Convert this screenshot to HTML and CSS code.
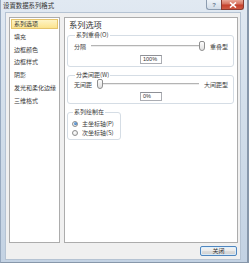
FILE: index.html
```html
<!DOCTYPE html>
<html lang="zh-CN">
<head>
<meta charset="utf-8">
<title>设置数据系列格式</title>
<link rel="stylesheet" href="styles.css">
</head>
<body>
<div class="window">
  <div class="titlebar">
    <span class="title">设置数据系列格式</span>
    <div class="caption-btns">
      <span class="cbtn help">?</span>
      <span class="cbtn close"><svg width="8" height="6" viewBox="0 0 8 6"><path d="M1 0.5 L7 5.5 M7 0.5 L1 5.5" stroke="#fff" stroke-width="1.6" fill="none"/></svg></span>
    </div>
  </div>
  <div class="client">
    <div class="panes">
      <ul class="nav">
        <li class="active">系列选项</li>
        <li>填充</li>
        <li>边框颜色</li>
        <li>边框样式</li>
        <li>阴影</li>
        <li>发光和柔化边缘</li>
        <li>三维格式</li>
      </ul>
      <div class="content">
        <h1 class="heading">系列选项</h1>
        <fieldset class="group">
          <legend>系列重叠(<u>O</u>)</legend>
          <div class="slider-row">
            <span>分隔</span>
            <div class="slider"><div class="rail"><div class="track"></div><div class="thumb" style="left:100%"></div></div></div>
            <span>重叠型</span>
          </div>
          <div class="value-wrap"><div class="value">100%</div></div>
        </fieldset>
        <fieldset class="group tight">
          <legend>分类间距(<u>W</u>)</legend>
          <div class="slider-row">
            <span>无间距</span>
            <div class="slider"><div class="rail"><div class="track"></div><div class="thumb" style="left:0%"></div></div></div>
            <span>大间距型</span>
          </div>
          <div class="value-wrap"><div class="value">0%</div></div>
        </fieldset>
        <fieldset class="group axis">
          <legend>系列绘制在</legend>
          <div class="radio-row"><span class="radio checked"></span><span>主坐标轴(<u>P</u>)</span></div>
          <div class="radio-row"><span class="radio"></span><span>次坐标轴(<u>S</u>)</span></div>
        </fieldset>
      </div>
    </div>
    <div class="footer"><button class="btn">关闭</button></div>
  </div>
</div>
</body>
</html>
```

FILE: styles.css
```css
* {
  box-sizing: border-box;
  margin: 0;
  padding: 0;
}

html, body {
  width: 249px;
  height: 263px;
  overflow: hidden;
}

body {
  font-family: "Noto Sans CJK SC", "Noto Sans", sans-serif;
  font-size: 6px;
  color: #3a3a3a;
  background: #c9d7e6;
}

.window {
  width: 249px;
  height: 263px;
  display: flex;
  flex-direction: column;
  padding: 0 6px 4px 4px;
  background: linear-gradient(180deg, #e1e9f2 0%, #d3dfeb 40%, #c3d2e3 100%);
  border-left: 1px solid #98aac0;
  border-right: 2px solid #8797aa;
  border-bottom: 1px solid #8797aa;
}

.titlebar {
  height: 14px;
  display: flex;
  align-items: flex-start;
}

.title {
  margin-left: -2px;
  font-size: 6.4px;
  line-height: 12px;
  color: #333;
}

.caption-btns {
  margin-left: auto;
  margin-right: -3px;
  display: flex;
}

.cbtn {
  height: 10px;
  display: flex;
  align-items: center;
  justify-content: center;
}

.help {
  width: 15px;
  border: 1px solid #8c9cb0;
  border-top: none;
  border-right: none;
  border-radius: 0 0 0 3px;
  background: linear-gradient(180deg, #eef3f8, #d2dce8);
  color: #6a7a90;
  font-family: "Liberation Sans", sans-serif;
  font-size: 6px;
  font-weight: bold;
}

.close {
  width: 23px;
  border: 1px solid #8a3b30;
  border-top: none;
  border-radius: 0 0 3px 0;
  background: linear-gradient(180deg, #e9a898 0%, #d6735f 45%, #c4402c 55%, #cf5a43 100%);
}

.client {
  flex: 1;
  display: flex;
  flex-direction: column;
  background: #f0f0f0;
  padding: 4px 2px 3px 3px;
  border: 1px solid #b5c3d3;
}

.panes {
  display: flex;
  gap: 4px;
  height: 226px;
}

.nav {
  width: 51px;
  list-style: none;
  background: #fff;
  border: 1px solid #acacac;
  padding-top: 1px;
}

.nav li {
  height: 10px;
  line-height: 10px;
  margin: 0 1px 2.8px 1px;
  padding-left: 3px;
  white-space: nowrap;
}

.nav li.active {
  line-height: 8px;
  padding-left: 2px;
  border: 1px solid #e5c46c;
  background: linear-gradient(180deg, #fef4c6, #fbe38e);
}

.content {
  flex: 1;
  background: #fff;
  border: 1px solid #acacac;
  padding: 1px 3px 0 2px;
}

.heading {
  font-size: 8.2px;
  font-weight: normal;
  line-height: 10px;
  margin-left: 2px;
  color: #333;
}

.group {
  border: 1px solid #d5dde5;
  border-radius: 3px;
  padding: 0 5px 2px 6px;
  margin-top: 2px;
}

.group + .group {
  margin-top: 4px;
}

legend {
  line-height: 8px;
  padding: 0 1px;
  margin-left: 1px;
}

u {
  text-decoration: none;
}

.slider-row {
  display: flex;
  align-items: center;
  gap: 5px;
  height: 10px;
  margin-top: 2px;
  white-space: nowrap;
}

.tight .slider-row {
  margin-top: 0;
}

.slider {
  flex: 1;
  height: 10px;
}

.rail {
  position: relative;
  height: 100%;
  margin: 0 3px;
}

.track {
  position: absolute;
  left: -3px;
  right: -3px;
  top: 4px;
  height: 2px;
  border-top: 1px solid #b4b4b4;
  border-bottom: 1px solid #ececec;
}

.thumb {
  position: absolute;
  top: 0;
  width: 6px;
  height: 10px;
  transform: translateX(-50%);
  border: 1px solid #8f8f8f;
  border-radius: 2px 2px 3px 3px;
  background: linear-gradient(180deg, #fdfdfd, #e0e0e0);
}

.value-wrap {
  display: flex;
  justify-content: center;
  margin-top: 4px;
}

.tight .value-wrap {
  margin-top: 3px;
}

.value {
  width: 22px;
  height: 9px;
  border: 1px solid #abadb3;
  border-top-color: #8e9096;
  background: #fff;
  font-family: "Liberation Sans", sans-serif;
  font-size: 5.5px;
  line-height: 7px;
  padding-left: 2px;
  color: #333;
}

.axis {
  width: 54px;
  padding: 3px 3px 2px 4px;
}

.radio-row {
  display: flex;
  align-items: center;
  gap: 4px;
  height: 9px;
  white-space: nowrap;
}

.radio {
  width: 6px;
  height: 6px;
  border-radius: 50%;
  border: 1px solid #8e8f8f;
  background: radial-gradient(circle at 40% 40%, #ffffff, #dcdcdc);
  display: flex;
  align-items: center;
  justify-content: center;
}

.radio.checked::after {
  content: "";
  width: 3px;
  height: 3px;
  border-radius: 50%;
  background: radial-gradient(circle at 40% 35%, #7fb4ea, #1f5ea8);
}

.footer {
  display: flex;
  justify-content: flex-end;
  padding-top: 3px;
  padding-right: 1px;
}

.btn {
  width: 37px;
  height: 10px;
  font-family: inherit;
  font-size: 6px;
  line-height: 8px;
  color: #333;
  border: 1px solid #4f86bf;
  border-radius: 2px;
  background: linear-gradient(180deg, #f3f3f3 0%, #ebebeb 48%, #dcdcdc 52%, #d0d0d0 100%);
  box-shadow: inset 0 0 0 1px rgba(220, 240, 255, 0.8);
}
```
